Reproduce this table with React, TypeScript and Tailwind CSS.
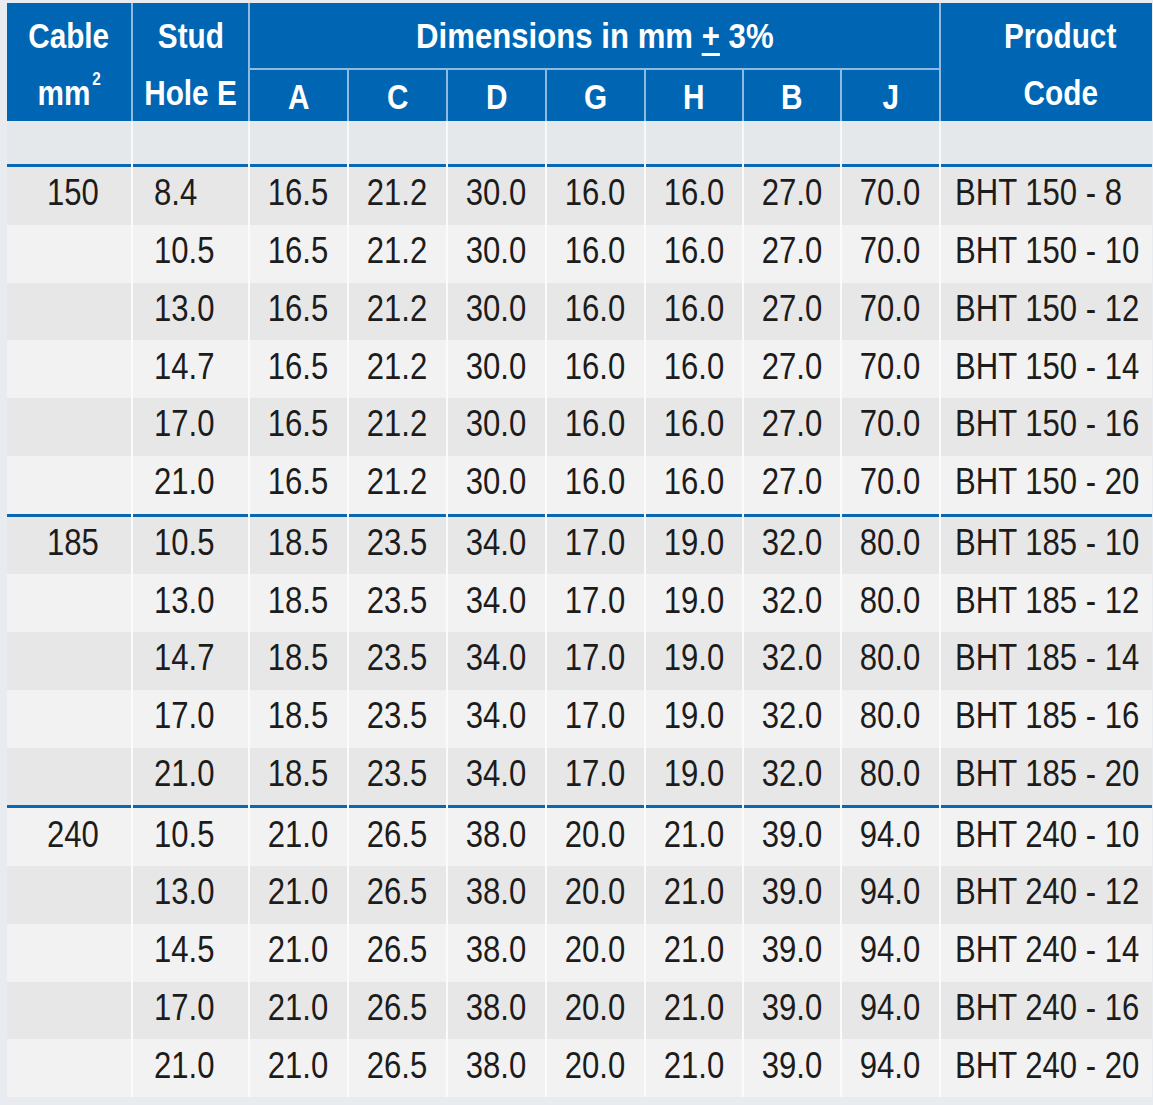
import React from "react";

const COLS = "grid grid-cols-[124px_115px_97px_97px_97px_97px_96px_96px_97px_211px] gap-x-[2px]";

type Group = { cable: string; dims: string[]; rows: [string, string][] };

const groups: Group[] = [
  {
    cable: "150",
    dims: ["16.5", "21.2", "30.0", "16.0", "16.0", "27.0", "70.0"],
    rows: [
      ["8.4", "BHT 150 - 8"],
      ["10.5", "BHT 150 - 10"],
      ["13.0", "BHT 150 - 12"],
      ["14.7", "BHT 150 - 14"],
      ["17.0", "BHT 150 - 16"],
      ["21.0", "BHT 150 - 20"],
    ],
  },
  {
    cable: "185",
    dims: ["18.5", "23.5", "34.0", "17.0", "19.0", "32.0", "80.0"],
    rows: [
      ["10.5", "BHT 185 - 10"],
      ["13.0", "BHT 185 - 12"],
      ["14.7", "BHT 185 - 14"],
      ["17.0", "BHT 185 - 16"],
      ["21.0", "BHT 185 - 20"],
    ],
  },
  {
    cable: "240",
    dims: ["21.0", "26.5", "38.0", "20.0", "21.0", "39.0", "94.0"],
    rows: [
      ["10.5", "BHT 240 - 10"],
      ["13.0", "BHT 240 - 12"],
      ["14.5", "BHT 240 - 14"],
      ["17.0", "BHT 240 - 16"],
      ["21.0", "BHT 240 - 20"],
    ],
  },
];

const font = { fontFamily: '"Liberation Sans", Arial, sans-serif' };

function H({ children }: { children: React.ReactNode }) {
  return <span className="inline-block scale-x-[0.85] whitespace-nowrap">{children}</span>;
}

function D({ children, left }: { children: React.ReactNode; left?: boolean }) {
  return (
    <span className={"inline-block scale-x-[0.84] whitespace-nowrap " + (left ? "origin-left" : "origin-center")}>
      {children}
    </span>
  );
}

export default function App() {
  let idx = 0;
  return (
    <div className="min-h-[1105px] w-[1153px] bg-[#e8ecf0] pt-[3px] pl-[7px]" style={font}>
      <div className="w-[1145px]">
        {/* Header */}
        <div className={COLS + " grid-rows-[65px_51px] gap-y-[2px] bg-[#8fbbe2] text-white font-bold text-[35px]"}>
          <div className="row-span-2 bg-[#0066b3] flex flex-col items-center pt-[4px] leading-[57px]">
            <H>Cable</H>
            <H>
              mm<span className="text-[18px] leading-none align-top relative top-[6px] ml-[2px]">2</span>
            </H>
          </div>
          <div className="row-span-2 bg-[#0066b3] flex flex-col items-center pt-[4px] leading-[57px]">
            <H>Stud</H>
            <H>Hole E</H>
          </div>
          <div className="col-span-7 bg-[#0066b3] flex items-center justify-center leading-none">
            <span className="inline-block scale-x-[0.89] whitespace-nowrap">
              Dimensions in mm{" "}
              <span className="underline decoration-[3px] underline-offset-[5px]">+</span> 3%
            </span>
          </div>
          <div className="row-span-2 bg-[#0066b3] flex flex-col items-center pt-[4px] pl-[28px] leading-[57px]">
            <H>Product</H>
            <H>Code</H>
          </div>
          {["A", "C", "D", "G", "H", "B", "J"].map((l) => (
            <div key={l} className="bg-[#0066b3] flex items-center justify-center leading-none pt-[2px]">
              <H>{l}</H>
            </div>
          ))}
        </div>

        {/* Empty spacer row */}
        <div className={COLS + " h-[43px] bg-[#f7f8f9]"}>
          {Array.from({ length: 10 }).map((_, i) => (
            <div key={i} className="bg-[#e5e8eb]" />
          ))}
        </div>

        {/* Data */}
        <div className="text-[37px] text-[#1c1c1c]">
          {groups.map((g) =>
            g.rows.map((r, ri) => {
              const dark = idx % 2 === 0;
              idx++;
              const bg = dark ? "bg-[#e7e7e7]" : "bg-[#f2f2f2]";
              const top = ri === 0 ? " border-t-[3px] border-[#0a67b2]" : "";
              const cell = bg + top + " flex items-center pb-[6px] leading-none";
              return (
                <div
                  key={g.cable + r[0]}
                  className={COLS + " bg-[#fbfbfb] " + (ri === 0 ? "h-[60.75px]" : "h-[57.75px]")}
                >
                  <div className={cell + " justify-center pl-[8px]"}>
                    {ri === 0 ? <D>{g.cable}</D> : null}
                  </div>
                  <div className={cell + " justify-start pl-[21px]"}>
                    <D left>{r[0]}</D>
                  </div>
                  {g.dims.map((d, di) => (
                    <div key={di} className={cell + " justify-center"}>
                      <D>{d}</D>
                    </div>
                  ))}
                  <div className={cell + " justify-start pl-[14px]"}>
                    <D left>{r[1]}</D>
                  </div>
                </div>
              );
            })
          )}
        </div>
      </div>
    </div>
  );
}
